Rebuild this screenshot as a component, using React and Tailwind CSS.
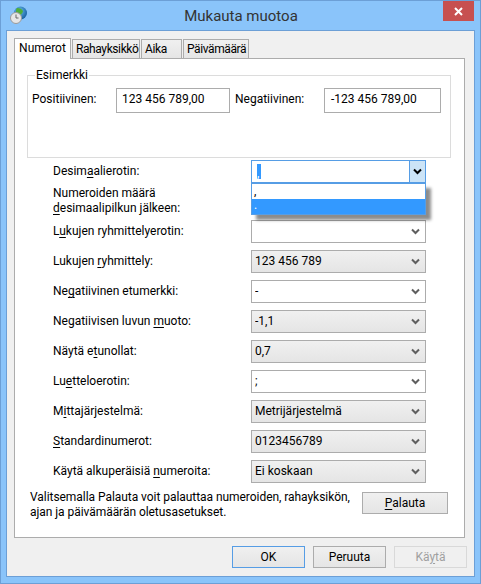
const Chevron = ({ color = "#5f5f5f" }) => (
  <svg width="9" height="7" viewBox="0 0 9 7" className="block">
    <path d="M1 1.5 L4.5 5 L8 1.5" fill="none" stroke={color} strokeWidth="2" />
  </svg>
);

const U = ({ children }) => <span className="underline underline-offset-2">{children}</span>;

function Combo({ value, gray }) {
  return (
    <div className={`w-[175px] h-[23px] flex items-center border border-[#acacac] pl-[3px] pr-[5px] shrink-0 ${gray ? "bg-gradient-to-b from-[#f0f0f0] to-[#e5e5e5]" : "bg-white"}`}>
      <span className="flex-1 truncate">{value}</span>
      <Chevron />
    </div>
  );
}

function Row({ label, value, gray }) {
  return (
    <div className="flex items-center h-[23px] mb-[7px]">
      <div className="w-[198px] shrink-0">{label}</div>
      <Combo value={value} gray={gray} />
    </div>
  );
}

function Tab({ children, w }) {
  return (
    <div className={`${w} h-[19px] mr-[1px] flex items-center pl-[3px] border border-b-0 border-[#acacac] bg-gradient-to-b from-[#f0f0f0] to-[#e5e5e5] text-[12px] tracking-[-0.4px] whitespace-nowrap`}>
      {children}
    </div>
  );
}

function Btn({ children, w, cls = "border-[#acacac]", text = "" }) {
  return (
    <div className={`${w} h-[22px] flex items-center justify-center border bg-gradient-to-b from-[#f0f0f0] to-[#e5e5e5] ${cls} ${text}`}>
      {children}
    </div>
  );
}

export default function App() {
  return (
    <div className="w-[481px] h-[584px] overflow-hidden flex flex-col bg-[#8ac4fa] border border-[#6c9fd6] text-[12px] leading-[15px] text-[#000] font-['Roboto','Noto_Sans',sans-serif]">
      <div className="h-[29px] shrink-0 flex items-start relative">
        <svg width="18" height="20" viewBox="0 0 18 20" className="absolute left-[9px] top-[5px]">
          <defs>
            <radialGradient id="g" cx="40%" cy="35%" r="70%">
              <stop offset="0" stopColor="#6fc3ef" />
              <stop offset="1" stopColor="#125a9e" />
            </radialGradient>
          </defs>
          <circle cx="10.5" cy="7" r="6.5" fill="url(#g)" />
          <path d="M7 2 C10 2 12 3 13 5 C13 7 11 8 10 10 C8 10 7 8 6 6 C6 4 6 3 7 2Z" fill="#4fae3a" />
          <circle cx="6" cy="12" r="5.5" fill="#e6e6e6" stroke="#9a9a9a" strokeWidth="1" />
          <path d="M6 8.5 V12 H8.5" fill="none" stroke="#666" strokeWidth="1" />
        </svg>
        <div className="flex-1 text-center text-[15px] leading-[20px] pt-[5px] text-[#333] pl-[1px]">Mukauta muotoa</div>
        <div className="absolute right-[6px] top-0 w-[31px] h-[20px] bg-[#c75050] flex items-center justify-center">
          <svg width="9" height="9" viewBox="0 0 9 9"><path d="M1 1 L8 8 M8 1 L1 8" stroke="#fff" strokeWidth="2" /></svg>
        </div>
      </div>

      <div className="mx-[5px] h-[547px] border border-[#6c9fd6] bg-[#f0f0f0] px-[7px] pt-[7px] flex flex-col">
        <div className="flex items-end h-[20px] relative z-10">
          <div className="w-[57px] h-[21px] flex items-center justify-center pb-[2px] -mb-[1px] border border-b-0 border-[#acacac] bg-white mr-[1px]">Numerot</div>
          <Tab w="w-[68px]">Rahayksikkö</Tab>
          <Tab w="w-[41px]">Aika</Tab>
          <Tab w="w-[66px]">Päivämäärä</Tab>
        </div>
        <div className="w-[451px] h-[480px] border border-[#acacac] bg-white px-[12px] pt-[16px]">
          <div className="relative w-[424px] h-[83px] border border-[#dcdcdc] pl-[4px] pt-[12px] flex items-start">
            <span className="absolute left-[7px] -top-[8px] bg-white px-[1px]">Esimerkki</span>
            <span className="w-[84px] mt-[4px]">Positiivinen:</span>
            <div className="w-[114px] h-[25px] border border-[#acacac] pl-[5px] pt-[3px]">123 456 789,00</div>
            <span className="w-[89px] ml-[5px] mt-[4px]">Negatiivinen:</span>
            <div className="w-[117px] h-[25px] border border-[#acacac] pl-[6px] pt-[3px]">-123 456 789,00</div>
          </div>

          <div className="pl-[26px] mt-[2px] relative">
            <div className="flex items-center h-[23px] mb-[2px]">
              <div className="w-[198px] shrink-0">Desim<U>a</U>alierotin:</div>
              <div className="relative w-[175px] h-[23px] flex border border-[#569de5] bg-white">
                <div className="flex-1 pl-[5px] pt-[3px]">
                  <span className="inline-block w-[4px] h-[15px] bg-[#3399ff] text-white leading-[18px]">,</span>
                </div>
                <div className="w-[16px] border-l border-[#569de5] bg-[#cce4f7] flex items-center justify-center">
                  <Chevron color="#000" />
                </div>
                <div className="absolute z-20 -left-[1px] top-[22px] w-[175px] h-[32px] border border-[#569de5] bg-white shadow-[5px_5px_3px_rgba(0,0,0,0.45)]">
                  <div className="h-[15px] pl-[2px] leading-[14px]">,</div>
                  <div className="h-[15px] bg-[#3399ff] text-white pl-[2px] leading-[12px]">.</div>
                </div>
              </div>
            </div>
            <div className="h-[35px] leading-[15px] pt-[1px]">
              Numeroiden määrä<br /><U>d</U>esimaalipilkun jälkeen:
            </div>
            <Row label={<>L<U>u</U>kujen ryhmittelyerotin:</>} value="" />
            <Row label={<>Lukujen <U>r</U>yhmittely:</>} value="123 456 789" gray />
            <Row label={<>Ne<U>g</U>atiivinen etumerkki:</>} value="-" />
            <Row label={<>Negatiivisen luvun <U>m</U>uoto:</>} value="-1,1" gray />
            <Row label={<>Näytä e<U>t</U>unollat:</>} value="0,7" gray />
            <Row label={<>Lu<U>e</U>tteloerotin:</>} value=";" />
            <Row label={<>M<U>i</U>ttajärjestelmä:</>} value="Metrijärjestelmä" gray />
            <Row label={<><U>S</U>tandardinumerot:</>} value="0123456789" gray />
            <Row label={<>Käytä alkuperäisiä <U>n</U>umeroita:</>} value="Ei koskaan" gray />
          </div>

          <div className="flex items-start mt-[1px] pl-[3px]">
            <div className="w-[332px] leading-[15px] tracking-[-0.05px]">
              Valitsemalla Palauta voit palauttaa numeroiden, rahayksikön,<br />ajan ja päivämäärän oletusasetukset.
            </div>
            <div className="mt-[2px]"><Btn w="w-[86px]"><span><U>P</U>alauta</span></Btn></div>
          </div>
        </div>
        <div className="flex justify-end gap-[8px] mt-[8px]">
          <Btn w="w-[73px]" cls="border-[#569de5]">OK</Btn>
          <Btn w="w-[73px]">Peruuta</Btn>
          <Btn w="w-[73px]" cls="border-[#d9d9d9] bg-none bg-[#f0f0f0]" text="text-[#a0a0a0]"><span>Kä<U>y</U>tä</span></Btn>
        </div>
      </div>
    </div>
  );
}
